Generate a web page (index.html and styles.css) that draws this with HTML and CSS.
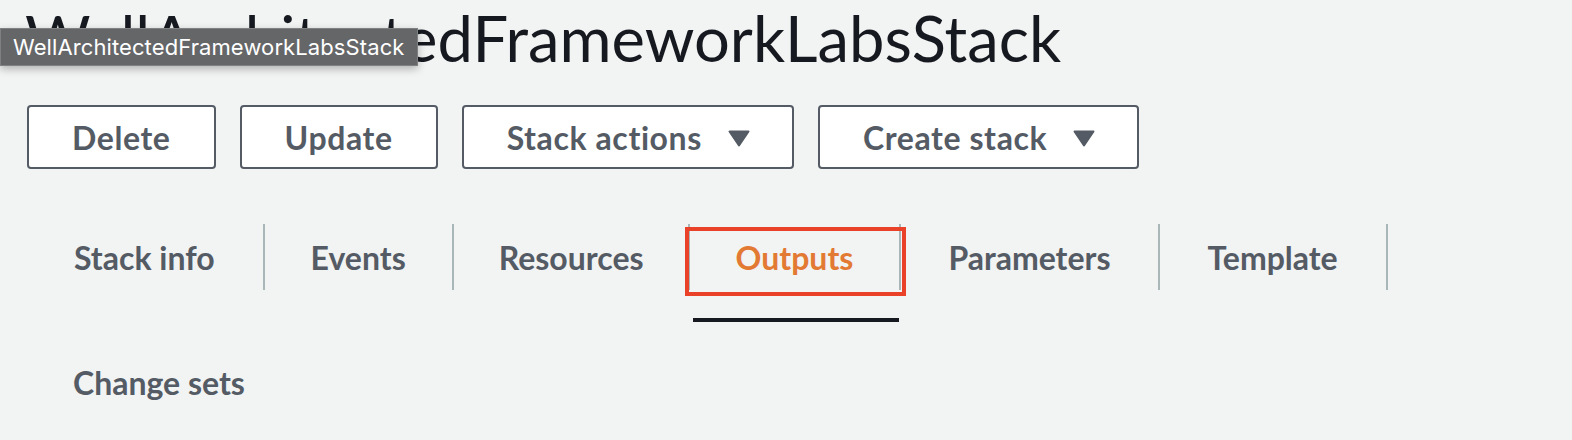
FILE: index.html
```html
<!DOCTYPE html>
<html lang="en">
<head>
<meta charset="utf-8">
<title>WellArchitectedFrameworkLabsStack</title>
<link rel="stylesheet" href="styles.css">
</head>
<body>
<div class="page">
  <header class="header">
    <h1 class="title">WellArchitectedFrameworkLabsStack</h1>
    <div class="tooltip">WellArchitectedFrameworkLabsStack</div>
  </header>
  <div class="actions">
    <button class="btn">Delete</button>
    <button class="btn">Update</button>
    <button class="btn btn-drop">Stack actions
      <svg class="caret" width="22" height="17" viewBox="0 0 22 17"><path d="M1.5 1.5 H20.5 L11 15.5 Z" fill="#545b64" stroke="#545b64" stroke-width="2" stroke-linejoin="round"/></svg>
    </button>
    <button class="btn btn-drop">Create stack
      <svg class="caret" width="22" height="17" viewBox="0 0 22 17"><path d="M1.5 1.5 H20.5 L11 15.5 Z" fill="#545b64" stroke="#545b64" stroke-width="2" stroke-linejoin="round"/></svg>
    </button>
  </div>
  <ul class="tabs">
    <li class="tab"><span class="tab-label tab-wide">Stack info</span></li>
    <li class="tab"><span class="tab-label">Events</span></li>
    <li class="tab"><span class="tab-label tab-narrow">Resources</span></li>
    <li class="tab tab-active"><span class="tab-label">Outputs</span><span class="highlight"></span></li>
    <li class="tab"><span class="tab-label tab-wide">Parameters</span></li>
    <li class="tab"><span class="tab-label tab-wide">Template</span></li>
    <li class="tab"><span class="tab-label">Change sets</span></li>
  </ul>
</div>
</body>
</html>
```
FILE: styles.css
```css
html, body {
  margin: 0;
  padding: 0;
  background: #f2f3f3;
}
body {
  font-family: Lato, "Open Sans", sans-serif;
  color: #16191f;
  width: 1572px;
  height: 440px;
  overflow: hidden;
}
.page {
  display: flex;
  flex-direction: column;
}
.header {
  position: relative;
  height: 105px;
}
.title {
  margin: 6px 0 0 25px;
  font-size: 63.3px;
  line-height: 63px;
  font-weight: 400;
  color: #16191f;
  white-space: nowrap;
}
.tooltip {
  position: absolute;
  left: 0;
  top: 28px;
  width: 418px;
  height: 38px;
  box-sizing: border-box;
  padding-left: 12px;
  display: flex;
  align-items: center;
  background: #656668;
  border: 1px solid #7f8082;
  box-shadow: 0 3px 8px rgba(0, 0, 0, 0.28);
  color: #ffffff;
  font-family: Inter, "Liberation Sans", sans-serif;
  font-size: 22px;
  letter-spacing: 0.1px;
  line-height: 1;
  white-space: nowrap;
}
.actions {
  display: flex;
  gap: 24px;
  padding-left: 27px;
}
.btn {
  height: 64px;
  box-sizing: border-box;
  display: flex;
  align-items: center;
  padding: 0 43px;
  background: #ffffff;
  border: 2px solid #545b64;
  border-radius: 4px;
  font-family: Lato, sans-serif;
  font-weight: 700;
  font-size: 32px;
  letter-spacing: 0.6px;
  color: #545b64;
  white-space: nowrap;
}
.btn-drop {
  gap: 26px;
  padding-right: 42px;
}
.caret {
  display: block;
  margin-top: 2px;
}
.tabs {
  list-style: none;
  margin: 31px 0 0;
  padding: 0 0 0 27px;
  display: flex;
  flex-wrap: wrap;
}
.tab {
  position: relative;
  display: flex;
  flex-direction: column;
  padding: 24px 0 3px;
  height: 125px;
  box-sizing: border-box;
}
.tab-label {
  height: 66px;
  display: flex;
  align-items: center;
  padding: 0 46px;
  border-right: 2px solid #aab7b8;
  font-weight: 700;
  font-size: 32px;
  color: #545b64;
  white-space: nowrap;
}
.tab-wide {
  padding-left: 47px;
  padding-right: 48px;
}
.tab-narrow {
  padding-left: 45px;
  padding-right: 44px;
}
.tab:last-child .tab-label {
  border-right: none;
}
.tab-active .tab-label {
  color: #e37a34;
}
.tab-active::after {
  content: "";
  display: block;
  height: 4px;
  margin: 28px 2px 0 3px;
  background: #16191f;
}
.highlight {
  position: absolute;
  left: -5px;
  right: -5px;
  top: 27px;
  height: 69px;
  box-sizing: border-box;
  border: 4px solid #ea4229;
}
```
